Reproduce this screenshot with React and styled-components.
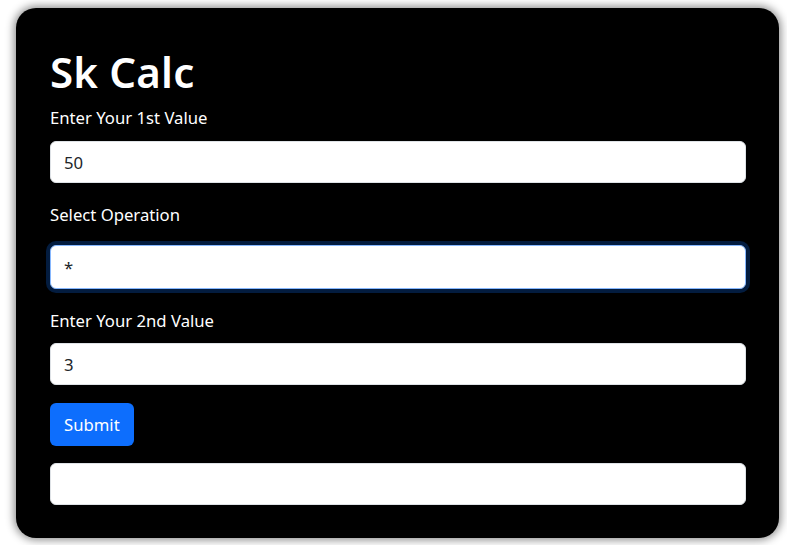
import React from "react";
import styled, { createGlobalStyle } from "styled-components";

const Global = createGlobalStyle`
  html, body { margin: 0; padding: 0; background: #ffffff; }
  body { font-family: "Noto Sans", "Open Sans", sans-serif; }
  * { box-sizing: border-box; }
`;

const Page = styled.div`
  padding: 8px 8px 7px 16px;
  width: 787px;
`;

const Card = styled.div`
  width: 763px;
  background: #000;
  border-radius: 20px;
  box-shadow: 0 0 8px 2px rgba(0, 0, 0, 0.45);
  padding: 40px 33px 33px 34px;
  display: flex;
  flex-direction: column;
`;

const Title = styled.h1`
  margin: 0 0 10px;
  color: #fff;
  font-size: 42px;
  font-weight: 600;
  line-height: 48px;
  letter-spacing: 0.2px;
`;

const Label = styled.label`
  display: block;
  color: #fff;
  font-size: 16.7px;
  line-height: 24px;
  margin-bottom: ${(p) => p.$gap ?? 11}px;
`;

const Field = styled.input`
  display: block;
  width: 100%;
  height: ${(p) => (p.$tall ? 44 : 42)}px;
  padding: 6px 13px;
  font-family: inherit;
  font-size: 16.7px;
  color: #212529;
  background: #fff;
  border: 1px solid ${(p) => (p.$focus ? "#86b7fe" : "#dee2e6")};
  border-radius: 6px;
  outline: none;
  box-shadow: ${(p) => (p.$focus ? "0 0 0 4px rgba(13,110,253,0.25)" : "none")};
  margin-bottom: ${(p) => p.$mb ?? 20}px;
`;

const Button = styled.button`
  align-self: flex-start;
  height: 43px;
  padding: 0 14px;
  font-family: inherit;
  font-size: 16.7px;
  color: #fff;
  background: #0d6efd;
  border: none;
  border-radius: 6px;
  margin-bottom: 17px;
`;

export default function App() {
  return (
    <>
      <Global />
      <Page>
        <Card>
          <Title>Sk Calc</Title>
          <Label>Enter Your 1st Value</Label>
          <Field defaultValue="50" />
          <Label $gap={18}>Select Operation</Label>
          <Field defaultValue="*" $focus $tall $mb={20} />
          <Label $gap={10}>Enter Your 2nd Value</Label>
          <Field defaultValue="3" $mb={18} />
          <Button>Submit</Button>
          <Field defaultValue="" $mb={0} />
        </Card>
      </Page>
    </>
  );
}
